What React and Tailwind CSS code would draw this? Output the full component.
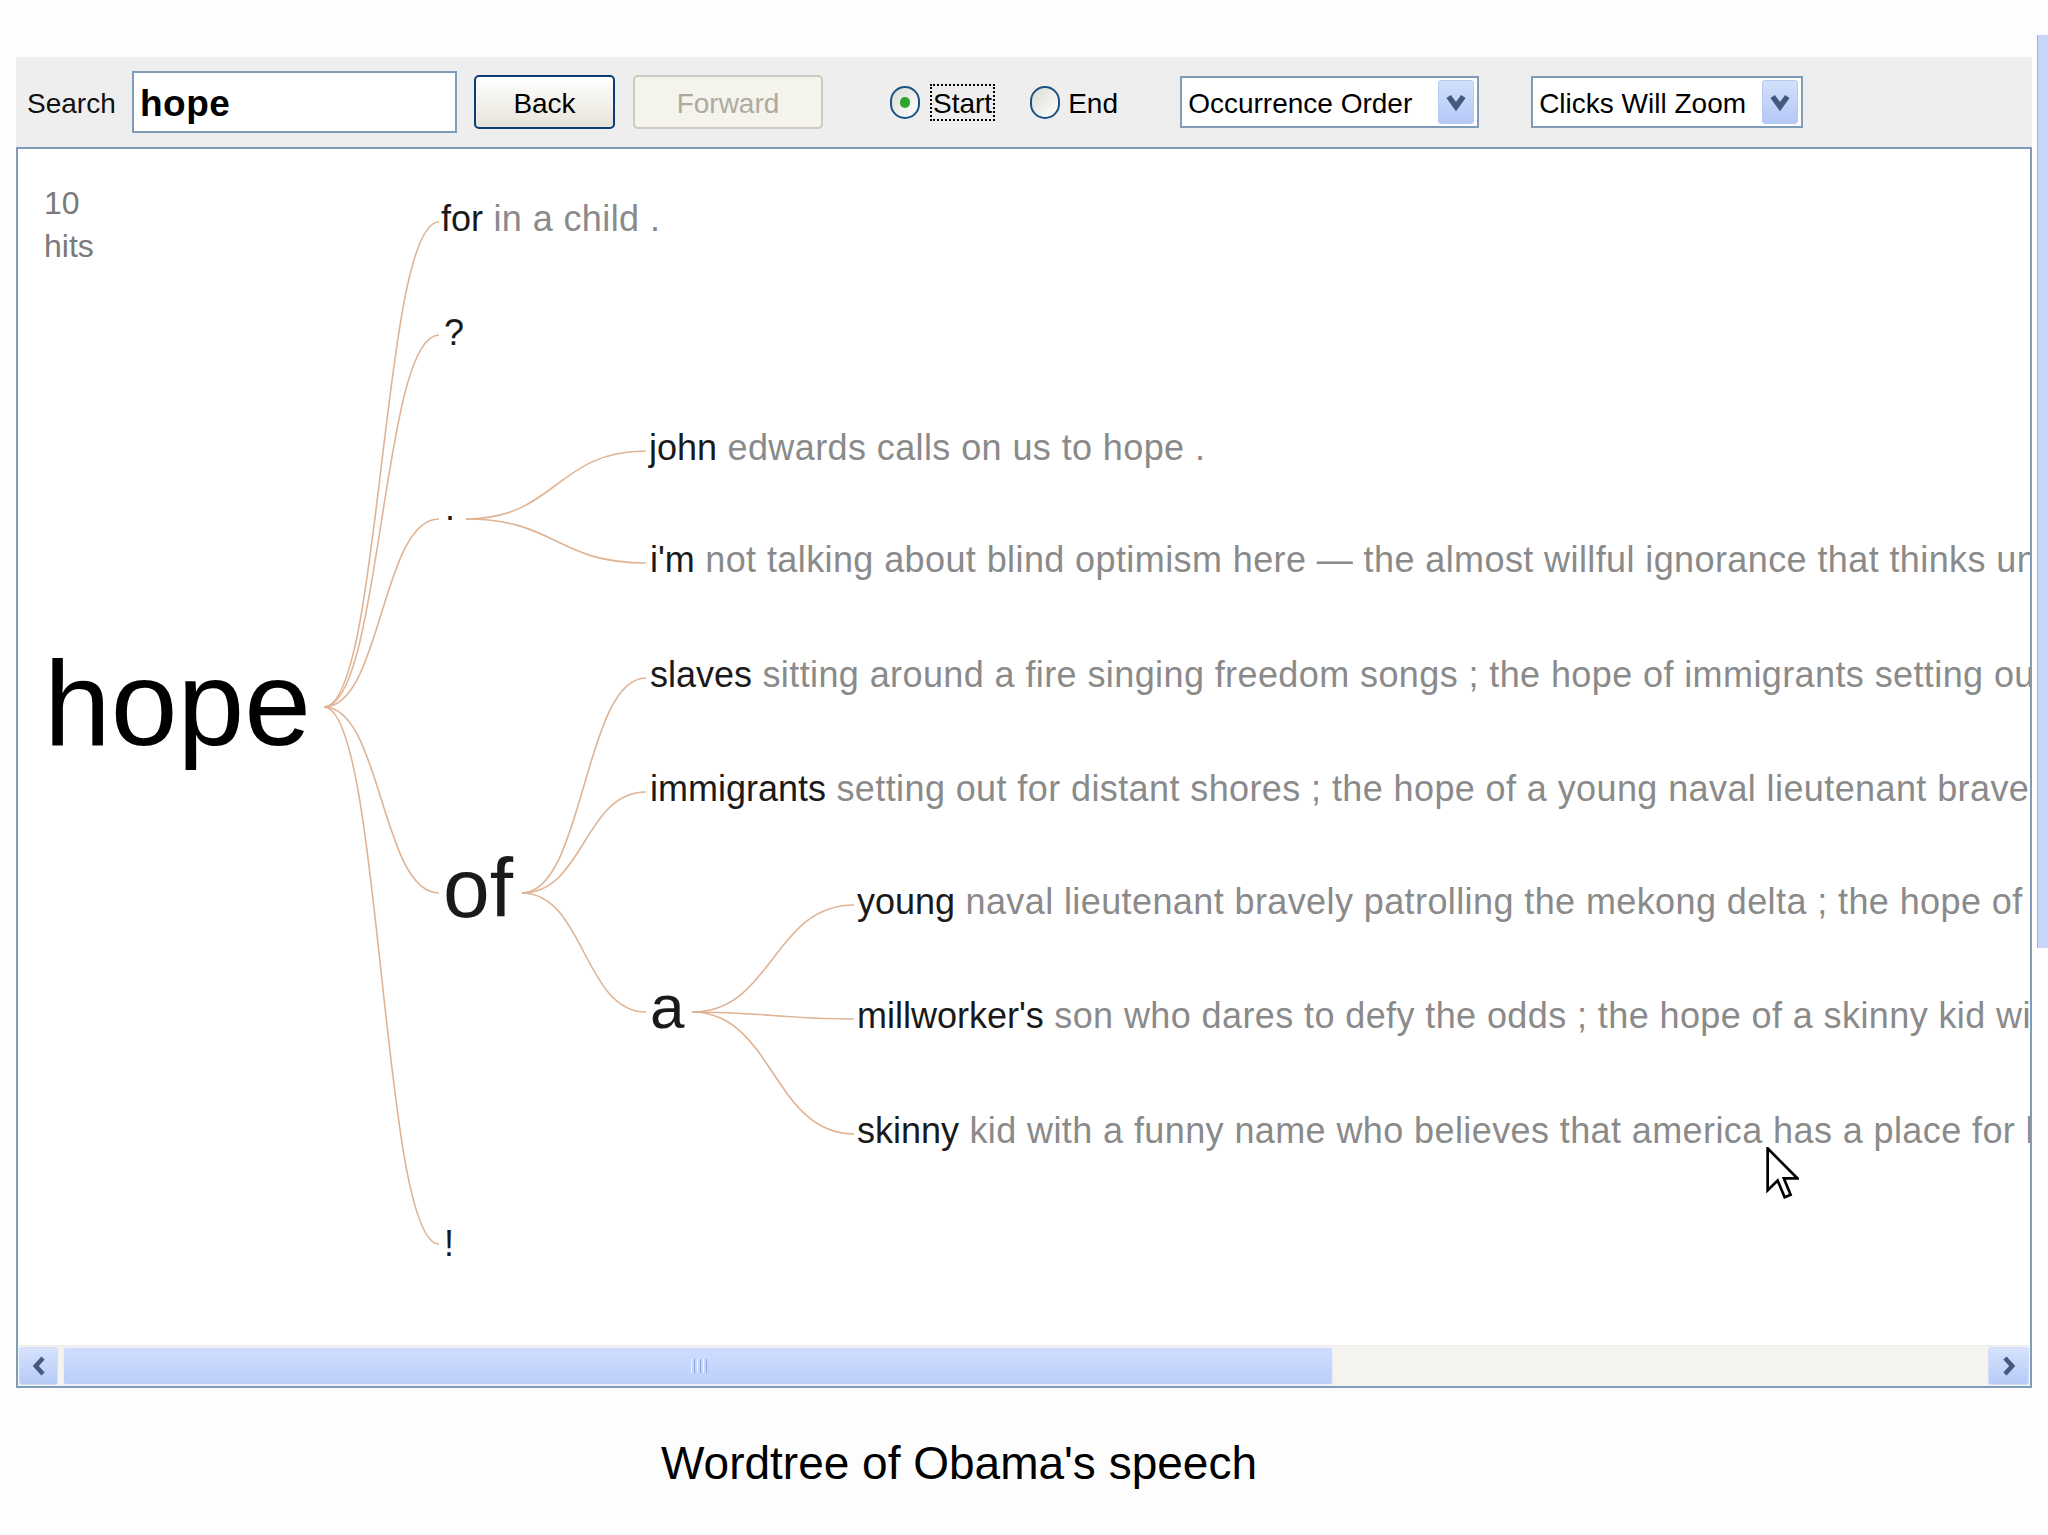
import React from "react";

const FONT = { fontFamily: '"Liberation Sans", Arial, sans-serif' };

const labels = [
  { x: 423, cy: 73, size: 36, head: "for", tail: " in a child ." },
  { x: 426, cy: 187, size: 36, head: "?", tail: "" },
  { x: 427, cy: 362, size: 36, head: ".", tail: "" },
  { x: 631, cy: 302, size: 36, head: "john", tail: " edwards calls on us to hope ." },
  { x: 632, cy: 414, size: 36, head: "i'm", tail: " not talking about blind optimism here \u2014 the almost willful ignorance that thinks unemployment will go away" },
  { x: 632, cy: 529, size: 36, head: "slaves", tail: " sitting around a fire singing freedom songs ; the hope of immigrants setting out for distant shores" },
  { x: 632, cy: 643, size: 36, head: "immigrants", tail: " setting out for distant shores ; the hope of a young naval lieutenant bravely patrolling" },
  { x: 425, cy: 746, size: 84, head: "of", tail: "" },
  { x: 632, cy: 863, size: 62, head: "a", tail: "" },
  { x: 839, cy: 756, size: 36, head: "young", tail: " naval lieutenant bravely patrolling the mekong delta ; the hope of a millworker's son" },
  { x: 839, cy: 870, size: 36, head: "millworker's", tail: " son who dares to defy the odds ; the hope of a skinny kid with a funny name" },
  { x: 839, cy: 985, size: 36, head: "skinny", tail: " kid with a funny name who believes that america has a place for him too" },
  { x: 426, cy: 1098, size: 36, head: "!", tail: "" },
];

const edges = [
  [306, 558, 421, 73],
  [306, 558, 421, 186],
  [306, 558, 421, 370],
  [306, 558, 421, 744],
  [306, 558, 421, 1095],
  [448, 370, 628, 302],
  [448, 370, 628, 414],
  [504, 744, 628, 529],
  [504, 744, 628, 643],
  [504, 744, 628, 863],
  [674, 863, 836, 756],
  [674, 863, 836, 870],
  [674, 863, 836, 985],
];

function edgePath([px, py, cx, cy]) {
  const dx = (cx - px) * 0.5;
  return `M ${px} ${py} C ${px + dx} ${py}, ${cx - dx} ${cy}, ${cx} ${cy}`;
}

function Chevron({ className }) {
  return (
    <svg viewBox="0 0 12 10" className={className}>
      <polyline points="2,2 6,7.5 10,2" fill="none" stroke="#45587f" strokeWidth="3" />
    </svg>
  );
}

function Select({ width, text }) {
  return (
    <div
      className="flex h-[52px] items-center justify-between border-2 border-[#7f9db9] bg-white pl-[6px] pr-[3px]"
      style={{ width }}
    >
      <span className="pt-[3px] text-[28px] leading-none text-black">{text}</span>
      <div className="flex h-[44px] w-[36px] items-center justify-center rounded-[3px] border border-[#b7c9f5] bg-gradient-to-b from-[#d3e0fc] to-[#b5c9f6]">
        <Chevron className="h-[20px] w-[22px]" />
      </div>
    </div>
  );
}

function Radio({ checked }) {
  return (
    <div className="flex h-[33px] w-[30px] items-center justify-center rounded-full border-2 border-[#1c5180] bg-gradient-to-br from-[#dcdcd4] to-white">
      {checked && <div className="h-[11px] w-[10px] rounded-full bg-[#2da52d]" />}
    </div>
  );
}

function Cursor() {
  return (
    <svg viewBox="0 0 12 20" className="absolute left-[1748px] top-[998px] h-[54px] w-[33px]">
      <path
        d="M0.5 0.5 L0.5 16 L4.2 12.4 L6.8 18.6 L9 17.7 L6.5 11.6 L11.5 11.6 Z"
        fill="white"
        stroke="black"
        strokeWidth="1"
        strokeLinejoin="miter"
      />
    </svg>
  );
}

export default function App() {
  return (
    <div className="min-h-[1535px] w-[2048px] bg-[#fdfdfd]" style={FONT}>
      <div className="flex items-start">
        <div className="ml-[16px] w-[2016px] pt-[57px]">
          {/* Toolbar */}
          <div className="flex h-[90px] items-center bg-[#eeeeee] pl-[11px]">
            <span className="w-[105px] pt-[3px] text-[28px] leading-none text-[#111]">Search</span>
            <div className="flex h-[62px] w-[325px] items-center border-2 border-[#7f9db9] bg-white pl-[6px]">
              <span className="pt-[3px] text-[37px] font-bold leading-none tracking-[0.5px] text-black">hope</span>
            </div>
            <div className="ml-[17px] flex h-[54px] w-[141px] items-center justify-center rounded-[5px] border-2 border-[#0b3c74] bg-gradient-to-b from-white to-[#e6e4d8] pt-[3px] text-[28px] leading-none text-black">
              Back
            </div>
            <div className="ml-[18px] flex h-[54px] w-[190px] items-center justify-center rounded-[5px] border-2 border-[#cdcbbf] bg-[#f4f3ec] pt-[3px] text-[28px] leading-none text-[#aeab9e]">
              Forward
            </div>
            <div className="ml-[67px]">
              <Radio checked />
            </div>
            <span className="ml-[10px] border-2 border-dotted border-black px-[1px] pt-[3px] text-[28px] leading-[30px] text-black">
              Start
            </span>
            <div className="ml-[35px]">
              <Radio />
            </div>
            <span className="ml-[8px] w-[50px] pt-[3px] text-[28px] leading-none text-black">End</span>
            <div className="ml-[62px]">
              <Select width={299} text="Occurrence Order" />
            </div>
            <div className="ml-[52px]">
              <Select width={272} text="Clicks Will Zoom" />
            </div>
          </div>

          {/* Panel */}
          <div className="flex flex-col border-2 border-[#7f9db9] bg-white">
            <div className="relative h-[1196px] overflow-hidden">
              <svg className="absolute left-0 top-0 h-[1196px] w-[2012px]" viewBox="0 0 2012 1196">
                {edges.map((e, i) => (
                  <path key={i} d={edgePath(e)} fill="none" stroke="#e0b392" strokeWidth="1.6" />
                ))}
              </svg>
              <div className="absolute left-[26px] top-[33px] text-[32px] leading-[43px] text-[#7a7a7a]">
                10
                <br />
                hits
              </div>
              <div className="absolute left-[26px] top-[494px] text-[120px] leading-none text-black">
                hope
              </div>
              {labels.map((l, i) => (
                <div
                  key={i}
                  className="absolute whitespace-nowrap leading-none"
                  style={{ left: l.x, top: l.cy - 0.587 * l.size, fontSize: l.size }}
                >
                  <span className="text-[#1a1a1a]">{l.head}</span>
                  <span className="tracking-[0.4px] text-[#8a8a8a]">{l.tail}</span>
                </div>
              ))}
              <Cursor />
            </div>
            {/* Horizontal scrollbar */}
            <div className="flex h-[41px] items-center border-t border-[#ecebe6] bg-[#f4f3ee] px-[1px]">
              <div className="flex h-[38px] w-[39px] items-center justify-center rounded-[3px] border border-[#d0dcf8] bg-gradient-to-b from-[#d6e2fd] to-[#b7cbf7]">
                <svg viewBox="0 0 10 14" className="h-[24px] w-[16px]">
                  <polyline points="7.5,2 3,7 7.5,12" fill="none" stroke="#45587f" strokeWidth="2.8" />
                </svg>
              </div>
              <div className="ml-[5px] flex h-[38px] w-[1270px] items-center justify-center rounded-[3px] border border-[#e6edfd] bg-gradient-to-b from-[#cfdcfd] to-[#bccffa]">
                <div className="ml-[2px] flex gap-[2px]">
                  <div className="h-[14px] w-[1px] bg-[#eef3ff]" />
                  <div className="h-[14px] w-[1px] bg-[#8fa6dc]" />
                  <div className="h-[14px] w-[1px] bg-[#eef3ff]" />
                  <div className="h-[14px] w-[1px] bg-[#8fa6dc]" />
                  <div className="h-[14px] w-[1px] bg-[#eef3ff]" />
                  <div className="h-[14px] w-[1px] bg-[#8fa6dc]" />
                </div>
              </div>
              <div className="flex-1" />
              <div className="flex h-[38px] w-[41px] items-center justify-center rounded-[3px] border border-[#d0dcf8] bg-gradient-to-b from-[#d6e2fd] to-[#b7cbf7]">
                <svg viewBox="0 0 10 14" className="h-[24px] w-[16px]">
                  <polyline points="2.5,2 7,7 2.5,12" fill="none" stroke="#45587f" strokeWidth="2.8" />
                </svg>
              </div>
            </div>
          </div>

          {/* Caption */}
          <div className="mt-[52px] pr-[130px] text-center text-[46px] leading-none text-black">
            Wordtree of Obama&apos;s speech
          </div>
        </div>

        {/* Outer right scrollbar strip */}
        <div className="ml-[5px] mt-[35px] h-[913px] w-[11px] border-l border-[#9fb3de] bg-[#c6d5f8]" />
      </div>
    </div>
  );
}
